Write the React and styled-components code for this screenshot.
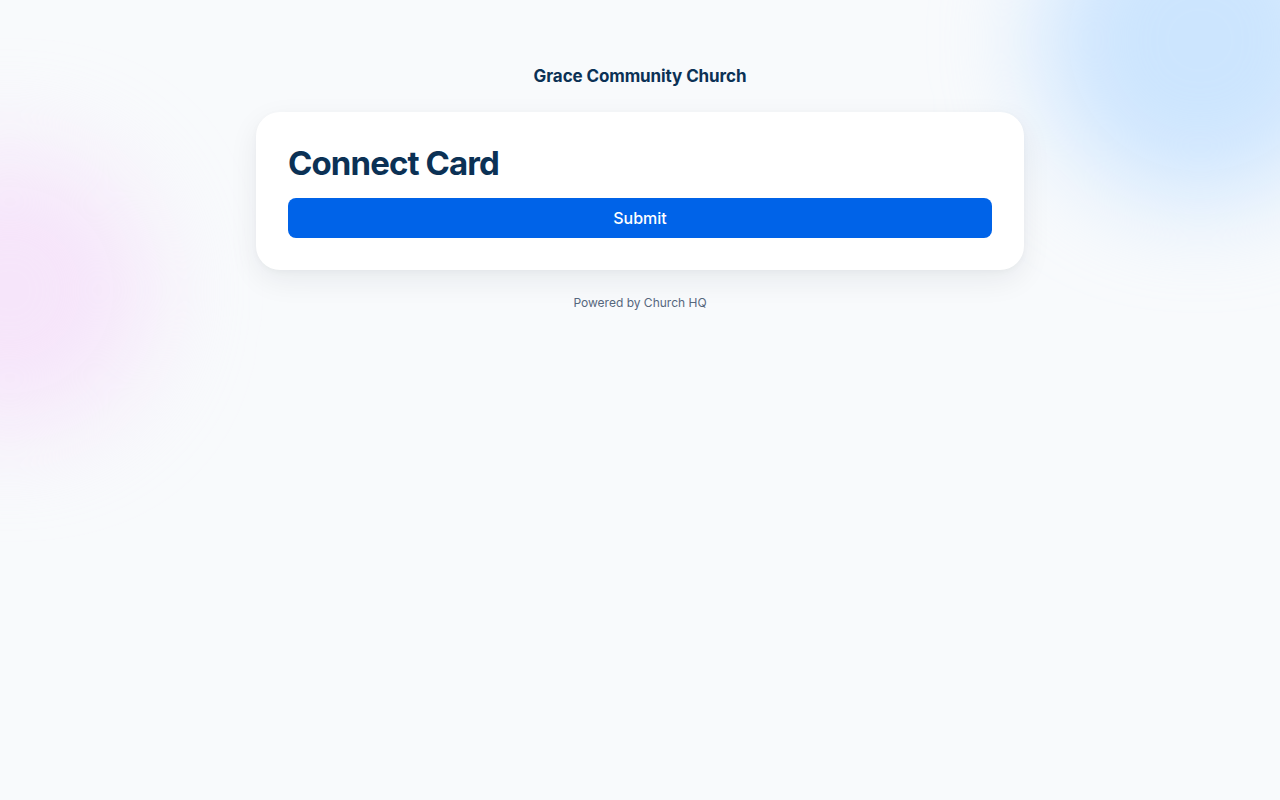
import React from 'react';
import styled, {createGlobalStyle} from 'styled-components';

const GlobalStyle = createGlobalStyle`
  html, body {
    margin: 0;
    padding: 0;
    background: #f8fafc;
    font-family: Inter, "Noto Sans", sans-serif;
  }
  * { box-sizing: border-box; }
`;

const Page = styled.div`
  position: relative;
  min-height: 800px;
  overflow: hidden;
  display: flex;
  flex-direction: column;
  align-items: center;
  padding-top: 65px;
`;

const Blob = styled.div`
  position: absolute;
  border-radius: 50%;
  filter: blur(50px);
  pointer-events: none;
  left: ${p => p.x}px;
  top: ${p => p.y}px;
  width: ${p => p.size}px;
  height: ${p => p.size}px;
  background: ${p => p.color};
`;

const ChurchName = styled.h2`
  position: relative;
  margin: 0 0 25px;
  font-size: 17px;
  line-height: 22px;
  font-weight: 700;
  color: #0b3155;
  letter-spacing: -0.1px;
`;

const Card = styled.div`
  position: relative;
  width: 768px;
  background: #fff;
  border-radius: 24px;
  padding: 32px;
  box-shadow: 0 10px 30px rgba(15, 23, 42, 0.07), 0 2px 6px rgba(15, 23, 42, 0.03);
  display: flex;
  flex-direction: column;
  gap: 16px;
`;

const Heading = styled.h1`
  margin: 0;
  font-size: 33px;
  line-height: 38px;
  font-weight: 700;
  color: #0b3155;
  letter-spacing: -0.9px;
`;

const SubmitButton = styled.button`
  height: 40px;
  width: 100%;
  border: 0;
  border-radius: 8px;
  background: #0063e8;
  color: #fff;
  font-family: inherit;
  font-size: 16px;
  font-weight: 500;
  cursor: pointer;
`;

const Footer = styled.p`
  position: relative;
  margin: 25px 0 0;
  font-size: 12px;
  line-height: 16px;
  color: #56677d;
`;

export default function App() {
  return (
    <Page>
      <GlobalStyle />
      <Blob x={1040} y={-120} size={320} color="rgba(190, 222, 255, 0.75)" />
      <Blob x={-130} y={150} size={280} color="rgba(245, 220, 250, 0.7)" />
      <ChurchName>Grace Community Church</ChurchName>
      <Card>
        <Heading>Connect Card</Heading>
        <SubmitButton>Submit</SubmitButton>
      </Card>
      <Footer>Powered by Church HQ</Footer>
    </Page>
  );
}
